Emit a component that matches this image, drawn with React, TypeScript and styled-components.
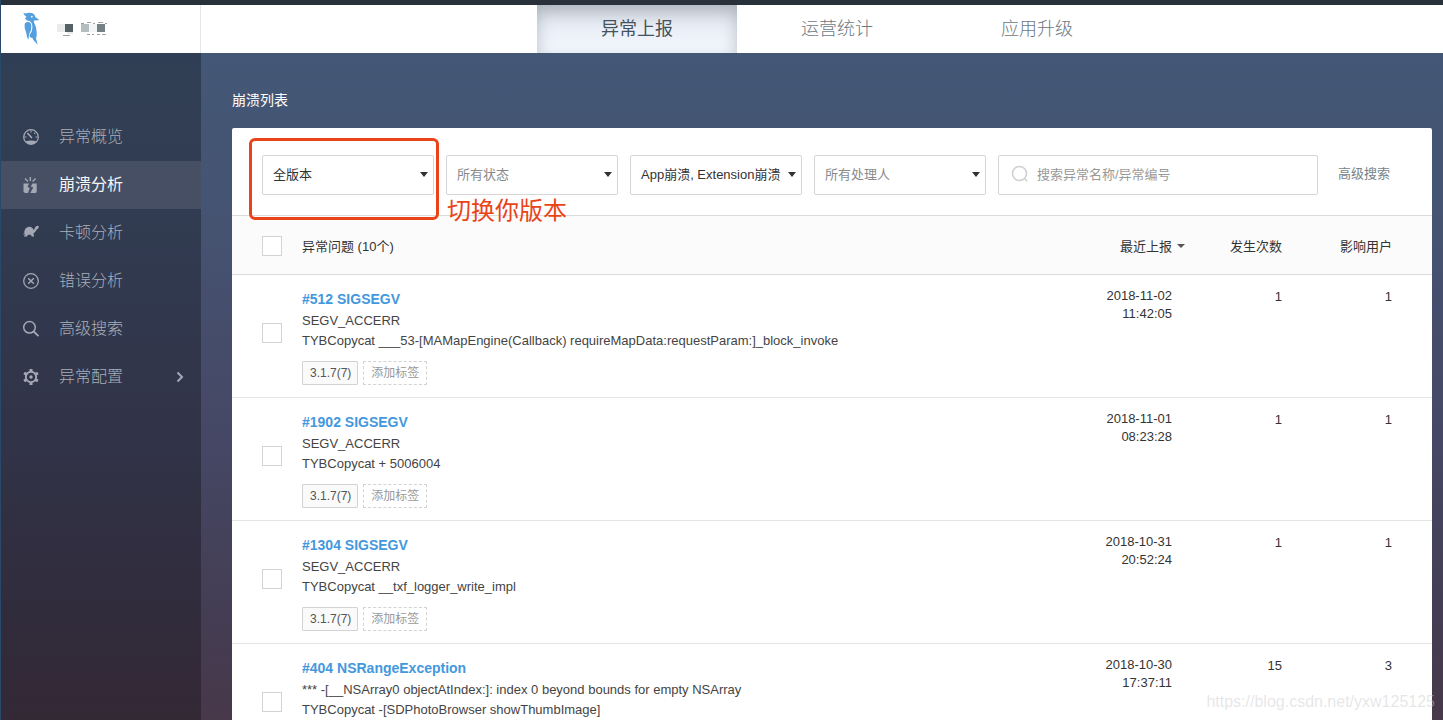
import React from "react";
import styled, { createGlobalStyle } from "styled-components";

const GlobalStyle = createGlobalStyle`
  *, *::before, *::after { box-sizing: border-box; }
  body {
    margin: 0;
    font-family: "Liberation Sans", "Noto Sans CJK SC", sans-serif;
    font-size: 13px;
    color: #333;
  }
  button, input, select { font: inherit; color: inherit; }
`;

const Shell = styled.div`
  position: relative;
  display: flex;
  flex-direction: column;
  height: 100vh;
  overflow: hidden;
  border-left: 1px solid #28496a;
  background: linear-gradient(180deg, #435776 7%, #455472 28%, #454764 62%, #443d53 86%, #48384a 100%);
`;

const TopStrip = styled.div`
  flex: none;
  height: 5px;
  background: #283039;
`;

const Header = styled.header`
  flex: none;
  display: flex;
  height: 48px;
  background: #fff;
`;

const Brand = styled.a`
  flex: none;
  display: flex;
  align-items: center;
  gap: 17px;
  width: 200px;
  padding: 0 0 2px 22px;
  border-right: 1px solid #e4e7ea;
`;

const Tabs = styled.nav`
  flex: 1;
  display: flex;
  justify-content: center;
  padding-left: 30px;
`;

const Tab = styled.a<{ $active?: boolean }>`
  width: 200px;
  line-height: 48px;
  text-align: center;
  text-decoration: none;
  font-size: 18px;
  font-weight: ${(p) => (p.$active ? 400 : 300)};
  color: ${(p) => (p.$active ? "#46535c" : "#6d787f")};
  background: ${(p) => (p.$active ? "linear-gradient(180deg, #d9dee6, #eaeff7 50%, #f4f8ff)" : "none")};
  box-shadow: ${(p) => (p.$active ? "inset 0 6px 16px rgba(50, 60, 70, 0.28)" : "none")};
`;

const Body = styled.div`
  flex: 1;
  display: flex;
  min-height: 0;
`;

const Sidebar = styled.nav`
  flex: none;
  width: 200px;
  padding-top: 60px;
  background: rgba(0, 0, 0, 0.28);
`;

const NavItem = styled.a<{ $active?: boolean }>`
  display: flex;
  align-items: center;
  gap: 18px;
  height: 48px;
  padding: 0 16px 0 20px;
  text-decoration: none;
  font-size: 16px;
  line-height: 24px;
  font-weight: ${(p) => (p.$active ? 400 : 300)};
  color: ${(p) => (p.$active ? "#f4f5f7" : "#a9afba")};
  background: ${(p) => (p.$active ? "rgba(255, 255, 255, 0.1)" : "none")};
  svg { flex: none; color: #a3a8b4; }
`;

const NavText = styled.span`
  flex: 1;
`;

const Main = styled.main`
  flex: 1;
  min-width: 0;
  padding: 37px 11px 0 31px;
`;

const PageTitle = styled.h1`
  margin: 0 0 18px;
  font-size: 14px;
  font-weight: 400;
  line-height: 20px;
  color: #fff;
`;

const Panel = styled.section`
  border-radius: 2px;
  background: #fff;
`;

const Filters = styled.form`
  display: flex;
  gap: 12px;
  padding: 27px 42px 20px 30px;
  border-bottom: 1px solid #dcdcdc;
`;

const SelectBox = styled.div`
  position: relative;
  flex: none;
  width: 172px;
  height: 40px;
`;

const Select = styled.select<{ $muted?: boolean }>`
  appearance: none;
  width: 100%;
  height: 40px;
  padding: 0 20px 2px 10px;
  border: 1px solid #d6d6d6;
  border-radius: 2px;
  background: #fff;
  color: ${(p) => (p.$muted ? "#8a8a8a" : "#333")};
`;

const SelectCaret = styled.span`
  position: absolute;
  top: 17px;
  right: 6px;
  border: 4px solid transparent;
  border-top: 5px solid #333;
  border-bottom: 0;
  pointer-events: none;
`;

const Highlight = styled.div`
  position: absolute;
  inset: -17px -5px -25px -13px;
  border: 3px solid #ea4318;
  border-radius: 6px;
  pointer-events: none;
`;

const Note = styled.div`
  position: absolute;
  top: 38px;
  left: 185px;
  z-index: 1;
  font-size: 24px;
  line-height: 36px;
  white-space: nowrap;
  color: #ea4318;
  pointer-events: none;
`;

const SearchBox = styled.label`
  flex: 1;
  display: flex;
  align-items: center;
  gap: 8px;
  min-width: 0;
  height: 40px;
  padding: 0 12px 2px;
  border: 1px solid #d6d6d6;
  border-radius: 2px;
  color: #d0d0d0;
  svg { flex: none; }
`;

const SearchInput = styled.input`
  flex: 1;
  min-width: 0;
  padding: 0;
  border: 0;
  outline: 0;
  background: none;
  color: #333;
  &::placeholder { color: #999; opacity: 1; }
`;

const AdvancedLink = styled.a`
  margin-left: 8px;
  line-height: 38px;
  white-space: nowrap;
  text-decoration: none;
  color: #76838a;
`;

const Table = styled.table`
  width: 100%;
  table-layout: fixed;
  border-collapse: separate;
  border-spacing: 0;
`;

const HeadCell = styled.th<{ $right?: number; $width?: number }>`
  width: ${(p) => (p.$width ? `${p.$width}px` : "auto")};
  height: 59px;
  padding: 0 ${(p) => p.$right ?? 0}px 0 0;
  border-bottom: 1px solid #dcdcdc;
  background: #fbfbfb;
  font-weight: 400;
  text-align: ${(p) => (p.$right ? "right" : "left")};
  white-space: nowrap;
  vertical-align: middle;
`;

const SortButton = styled.button`
  display: inline-flex;
  align-items: center;
  gap: 5px;
  padding: 0;
  border: 0;
  background: none;
  &::after {
    content: "";
    margin-top: 2px;
    border: 4px solid transparent;
    border-top: 4px solid #555;
    border-bottom: 0;
  }
`;

const CheckHeadCell = styled(HeadCell)`
  padding: 2px 0 0 30px;
`;

const Checkbox = styled.input.attrs({ type: "checkbox" })`
  appearance: none;
  display: block;
  width: 20px;
  height: 20px;
  margin: 0;
  border: 1px solid #d3d3d3;
  background: #fff;
`;

const Cell = styled.td<{ $right?: number }>`
  padding: 12px ${(p) => p.$right ?? 0}px 12px 0;
  border-bottom: 1px solid #e2e4e6;
  line-height: 18px;
  text-align: ${(p) => (p.$right ? "right" : "left")};
  vertical-align: top;
`;

const CountCell = styled(Cell)`
  padding-top: 13px;
`;

const CheckCell = styled(Cell)`
  padding: 48px 0 0 30px;
`;

const IssueCell = styled(Cell)`
  padding-top: 13px;
  line-height: 20px;
`;

const IssueLink = styled.a`
  display: block;
  margin-bottom: 1px;
  font-size: 14px;
  font-weight: 700;
  line-height: 22px;
  text-decoration: none;
  color: #4398dd;
`;

const IssueLine = styled.div`
  color: #444;
`;

const Tags = styled.div`
  display: flex;
  gap: 5px;
  margin-top: 10px;
`;

const Tag = styled.span`
  height: 24px;
  padding: 0 6px 0 7px;
  border: 1px solid #d3d3d3;
  border-radius: 1px;
  background: #fafafa;
  font-size: 12px;
  line-height: 23px;
  color: #555;
`;

const AddTag = styled.button`
  height: 24px;
  padding: 0 7px;
  border: 1px dashed #d3d3d3;
  border-radius: 1px;
  background: none;
  font-size: 12px;
  line-height: 20px;
  color: #999;
`;

const Watermark = styled.div`
  position: absolute;
  right: 8px;
  bottom: 9px;
  font-size: 16px;
  line-height: 18px;
  color: rgba(200, 200, 200, 0.45);
  pointer-events: none;
`;

const BirdLogo = () => (
  <svg width="17" height="33" viewBox="0 0 51 99" fill="#559fdf" aria-hidden="true">
    <path
      fillRule="evenodd"
      d="M1 2 Q8 6 13 3 Q22 1 29 4 Q36 8 37 15 L49 24 Q42 26 34 25 Q31 28 34 34 Q41 45 41 60 Q42 72 39 79 L44 98 L31 84 L29 79 L21 76 Q18 72 21 67 Q29 57 28 42 Q27 31 21 28 Q11 26 7 21 Q5 17 11 15 Q3 11 1 2 Z M24 14 a2.5 2.5 0 1 0 5 0 a2.5 2.5 0 1 0 -5 0 Z"
    />
    <path d="M5 35 Q8 29 16 30 Q24 31 25 41 Q26 53 20 62 Q17 68 17 83 L12 76 Q11 67 9 60 Q3 47 5 35 Z" />
  </svg>
);

const BrandMosaic = () => (
  <svg width="52" height="16" viewBox="0 0 52 16" aria-hidden="true">
    <path fill="#e9ebec" d="M0 4h8v8H0z M10 12h6v2h-6z" />
    <path fill="#566167" d="M8 4h8v8H8z" />
    <path fill="#b6bdc1" d="M24 4h8v8h-8z" />
    <path fill="#f4f5f6" d="M32 4h8v8h-8z" />
    <path fill="#758086" d="M40 4h8v8h-8z" />
    <path
      stroke="#9aa2a7"
      strokeWidth="1"
      fill="none"
      d="M24 3.500h3 M30 2.500h4 M36 3.500h2 M41 2.500h5 M48 3.500h2 M6 15.500h7 M30 14.500h3 M35 14.500h2 M40 14.500h3 M45 14.500h4"
    />
  </svg>
);

const GaugeIcon = () => (
  <svg width="20" height="20" viewBox="0 0 20 20" fill="none" stroke="currentColor" aria-hidden="true">
    <circle cx="10" cy="10" r="7.300" strokeWidth="1.300" />
    <path fill="currentColor" stroke="none" d="M4.200 14.500 Q10 12.300 15.800 14.500 A7.300 7.300 0 0 1 4.200 14.500 Z" />
    <path strokeWidth="1.700" strokeLinecap="round" d="M6.800 6.500 L10.500 10.500" />
    <path strokeWidth="1.100" d="M10 3.500v2 M14.400 5.600l-1.200 1.200 M3.500 10h2 M14.500 10h2" />
  </svg>
);

const CrashIcon = () => (
  <svg width="20" height="20" viewBox="0 0 20 20" fill="currentColor" aria-hidden="true">
    <path d="M2.500 8.500 H8 L6.500 12 L8.800 13 L7 18 H4 L2.500 16.800 Z" />
    <path d="M11.500 8.500 H15.700 V17 L14.700 18 H9.300 L12.300 12.500 L9.800 11.500 Z" />
    <path stroke="currentColor" strokeWidth="1.400" fill="none" d="M9.300 2v4 M4 3.500l3 3 M14.600 3.500l-3 3" />
  </svg>
);

const TurtleIcon = () => (
  <svg width="20" height="20" viewBox="0 0 20 20" fill="currentColor" aria-hidden="true">
    <path d="M3.300 10.500 Q3 4.500 8 3.700 Q11.500 3.500 12.800 7.300 L14.200 4.300 Q15.200 2.200 17.300 2.800 Q18.500 3.800 17.200 5.500 L15.500 6.700 Q14.500 9.500 12.500 10.200 L13 13.500 H10.800 L9.800 11.700 H7 L6 13.500 H2.800 L4.200 11.100 L2 11.500 Q2 10.700 3.300 10.500 Z" />
  </svg>
);

const ErrorIcon = () => (
  <svg width="20" height="20" viewBox="0 0 20 20" fill="none" stroke="currentColor" aria-hidden="true">
    <circle cx="10" cy="10" r="7.300" strokeWidth="1.300" />
    <path strokeWidth="1.500" d="M7.200 7.200l5.600 5.600 M12.800 7.200l-5.600 5.600" />
  </svg>
);

const SearchIcon = () => (
  <svg width="20" height="20" viewBox="0 0 20 20" fill="none" stroke="currentColor" strokeWidth="1.500" aria-hidden="true">
    <circle cx="8.500" cy="8.300" r="5.800" />
    <path strokeWidth="1.800" d="M12.700 12.500l4.800 4.700" />
  </svg>
);

const GearIcon = () => (
  <svg width="20" height="20" viewBox="0 0 20 20" fill="none" stroke="currentColor" aria-hidden="true">
    <circle cx="10" cy="10" r="5.200" strokeWidth="1.900" />
    <circle cx="10" cy="10" r="1.700" fill="currentColor" stroke="none" />
    <path
      strokeWidth="3"
      d="M10 2v2.500 M10 15.500v2.500 M3.100 6l2.200 1.300 M14.700 12.700l2.200 1.300 M3.100 14l2.200-1.300 M14.700 7.300l2.200-1.300"
    />
  </svg>
);

const ChevronIcon = () => (
  <svg width="10" height="12" viewBox="0 0 10 12" fill="none" stroke="currentColor" strokeWidth="2" aria-hidden="true">
    <path d="M2.500 1.500l4.500 4.500l-4.500 4.500" />
  </svg>
);

const FieldSearchIcon = () => (
  <svg width="18" height="18" viewBox="0 0 18 18" fill="none" stroke="currentColor" strokeWidth="1.600" aria-hidden="true">
    <circle cx="8.500" cy="8.500" r="7" />
    <path d="M13.200 13.300l3 3" />
  </svg>
);

const navItems = [
  { label: "异常概览", Icon: GaugeIcon },
  { label: "崩溃分析", Icon: CrashIcon, active: true },
  { label: "卡顿分析", Icon: TurtleIcon },
  { label: "错误分析", Icon: ErrorIcon },
  { label: "高级搜索", Icon: SearchIcon },
  { label: "异常配置", Icon: GearIcon, expandable: true },
];

const filters = [
  { label: "版本", value: "全版本", highlighted: true },
  { label: "状态", value: "所有状态", muted: true },
  { label: "类型", value: "App崩溃, Extension崩溃" },
  { label: "处理人", value: "所有处理人", muted: true },
];

const issues = [
  {
    title: "#512 SIGSEGV",
    reason: "SEGV_ACCERR",
    frame: "TYBCopycat ___53-[MAMapEngine(Callback) requireMapData:requestParam:]_block_invoke",
    tags: ["3.1.7(7)"],
    date: "2018-11-02",
    time: "11:42:05",
    count: 1,
    users: 1,
  },
  {
    title: "#1902 SIGSEGV",
    reason: "SEGV_ACCERR",
    frame: "TYBCopycat + 5006004",
    tags: ["3.1.7(7)"],
    date: "2018-11-01",
    time: "08:23:28",
    count: 1,
    users: 1,
  },
  {
    title: "#1304 SIGSEGV",
    reason: "SEGV_ACCERR",
    frame: "TYBCopycat __txf_logger_write_impl",
    tags: ["3.1.7(7)"],
    date: "2018-10-31",
    time: "20:52:24",
    count: 1,
    users: 1,
  },
  {
    title: "#404 NSRangeException",
    reason: "*** -[__NSArray0 objectAtIndex:]: index 0 beyond bounds for empty NSArray",
    frame: "TYBCopycat -[SDPhotoBrowser showThumbImage]",
    tags: [],
    date: "2018-10-30",
    time: "17:37:11",
    count: 15,
    users: 3,
  },
];

export default function App() {
  return (
    <Shell>
      <GlobalStyle />
      <TopStrip />
      <Header>
        <Brand href="#" aria-label="Bugly">
          <BirdLogo />
          <BrandMosaic />
        </Brand>
        <Tabs>
          <Tab href="#" $active>异常上报</Tab>
          <Tab href="#">运营统计</Tab>
          <Tab href="#">应用升级</Tab>
        </Tabs>
      </Header>
      <Body>
        <Sidebar>
          {navItems.map(({ label, Icon, active, expandable }) => (
            <NavItem key={label} href="#" $active={active}>
              <Icon />
              <NavText>{label}</NavText>
              {expandable && <ChevronIcon />}
            </NavItem>
          ))}
        </Sidebar>
        <Main>
          <PageTitle>崩溃列表</PageTitle>
          <Panel>
            <Filters>
              {filters.map((f) => (
                <SelectBox key={f.label}>
                  <Select aria-label={f.label} $muted={f.muted}>
                    <option>{f.value}</option>
                  </Select>
                  <SelectCaret />
                  {f.highlighted && (
                    <>
                      <Highlight />
                      <Note>切换你版本</Note>
                    </>
                  )}
                </SelectBox>
              ))}
              <SearchBox>
                <FieldSearchIcon />
                <SearchInput type="text" aria-label="搜索" placeholder="搜索异常名称/异常编号" />
              </SearchBox>
              <AdvancedLink href="#">高级搜索</AdvancedLink>
            </Filters>
            <Table>
              <thead>
                <tr>
                  <CheckHeadCell $width={70}>
                    <Checkbox aria-label="全选" />
                  </CheckHeadCell>
                  <HeadCell>异常问题 (10个)</HeadCell>
                  <HeadCell $width={110} $right={7}>
                    <SortButton type="button">最近上报</SortButton>
                  </HeadCell>
                  <HeadCell $width={110} $right={20}>发生次数</HeadCell>
                  <HeadCell $width={130} $right={40}>影响用户</HeadCell>
                </tr>
              </thead>
              <tbody>
                {issues.map((issue) => (
                  <tr key={issue.title}>
                    <CheckCell>
                      <Checkbox aria-label={issue.title} />
                    </CheckCell>
                    <IssueCell>
                      <IssueLink href="#">{issue.title}</IssueLink>
                      <IssueLine>{issue.reason}</IssueLine>
                      <IssueLine>{issue.frame}</IssueLine>
                      {issue.tags.length > 0 && (
                        <Tags>
                          {issue.tags.map((tag) => (
                            <Tag key={tag}>{tag}</Tag>
                          ))}
                          <AddTag type="button">添加标签</AddTag>
                        </Tags>
                      )}
                    </IssueCell>
                    <Cell $right={20}>
                      {issue.date}
                      <br />
                      {issue.time}
                    </Cell>
                    <CountCell $right={20}>{issue.count}</CountCell>
                    <CountCell $right={40}>{issue.users}</CountCell>
                  </tr>
                ))}
              </tbody>
            </Table>
          </Panel>
        </Main>
      </Body>
      <Watermark>https://blog.csdn.net/yxw125125</Watermark>
    </Shell>
  );
}
